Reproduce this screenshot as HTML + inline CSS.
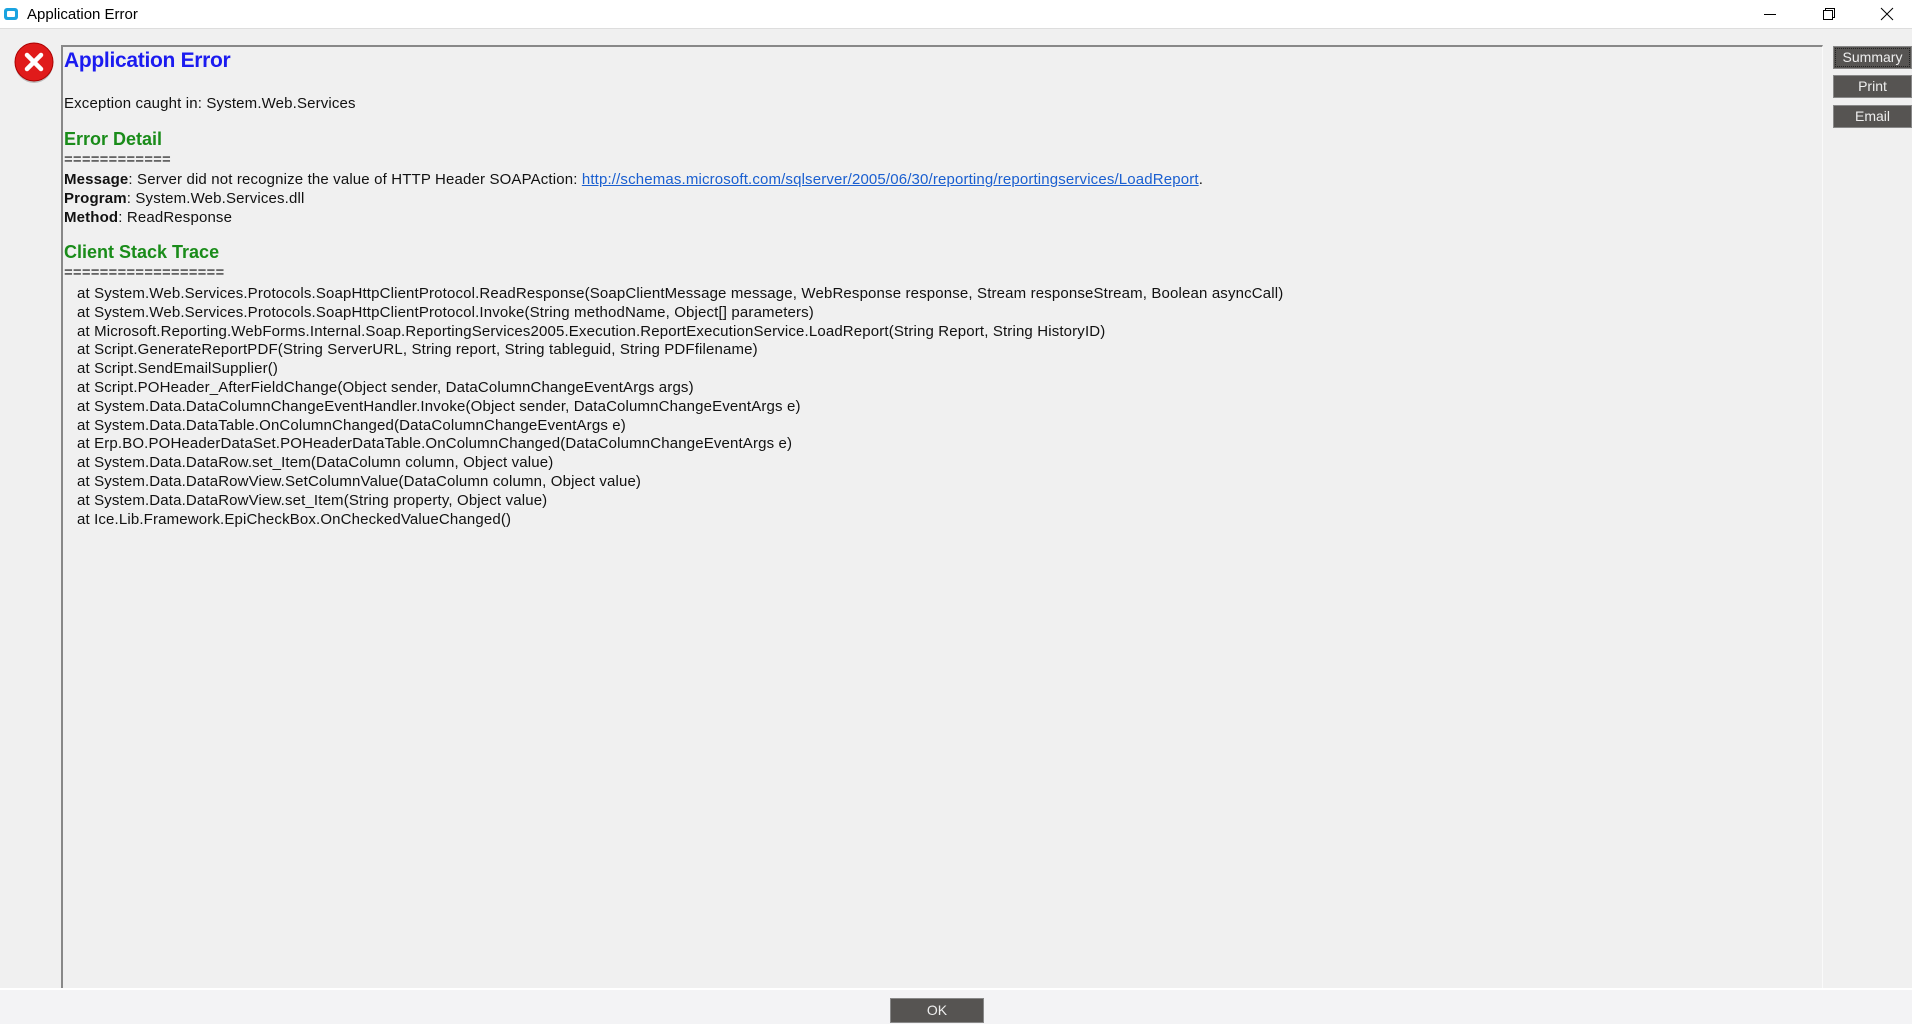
<!DOCTYPE html>
<html><head><meta charset="utf-8"><style>
*{margin:0;padding:0;box-sizing:border-box}
body{width:1912px;height:1024px;background:#f0f0f0;font-family:"Liberation Sans",Arial,sans-serif;position:relative;overflow:hidden;color:#111}
.title{position:absolute;left:0;top:0;width:1912px;height:29px;background:#fff;border-bottom:1px solid #ddd}
.title .t{position:absolute;left:27px;top:6px;font-size:15px;color:#000}
.title .ic{position:absolute;left:4px;top:8px;width:14px;height:12px;border-radius:3px;background:#1aa3e0}
.title .ic:after{content:"";position:absolute;left:3px;top:3px;width:8px;height:6px;background:#fff;border-radius:1px}
.panel{position:absolute;left:61px;top:45px;width:1762px;height:943px;border-top:2px solid #888;border-left:2px solid #888;border-right:1px solid #fafafa;background:#f0f0f0}
.txt{position:absolute;left:64px;top:0;font-size:15px;white-space:pre;line-height:18.8px;letter-spacing:0.15px}
.h1{position:absolute;left:64px;top:49px;font-size:21px;color:#1b1bf0;font-weight:bold;letter-spacing:-0.3px}
.g{color:#1a8c1a;font-size:18px;font-weight:bold;letter-spacing:0}
a{color:#1a5fd0;text-decoration:underline}
.btn{position:absolute;background:#565452;color:#eee;font-size:14px;text-align:center;border:1px solid #888}
.bottom{position:absolute;left:0;top:988px;width:1912px;height:36px;background:#f3f3f5;border-top:2px solid #fff}
</style></head><body>
<div class="title"><div class="ic"></div><div class="t">Application Error</div>
<svg style="position:absolute;left:1763px;top:8px" width="14" height="14"><path d="M1 6.5H13" stroke="#000" stroke-width="1"/></svg>
<svg style="position:absolute;left:1822px;top:7px" width="14" height="14"><path d="M1.5 3.5H10.5V12.5H1.5Z M3.5 3.5V1.5H12.5V10.5H10.5" stroke="#000" fill="none"/></svg>
<svg style="position:absolute;left:1880px;top:7px" width="14" height="14"><path d="M1 1L13 13M13 1L1 13" stroke="#000"/></svg>
</div>
<svg style="position:absolute;left:13px;top:42px" width="44" height="44"><circle cx="21" cy="22" r="19" fill="#888" opacity=".5"/><circle cx="21" cy="20" r="19" fill="#e01b1b" stroke="#a00" stroke-width="1"/><path d="M14 13L28 27M28 13L14 27" stroke="#fff" stroke-width="4.5" stroke-linecap="round"/></svg>
<div class="panel"></div>
<div class="h1">Application Error</div>
<div class="txt" style="top:95px">Exception caught in: System.Web.Services</div>
<div class="txt g" style="top:130px">Error Detail</div>
<div class="txt" style="top:151px">============</div>
<div class="txt" style="top:171px"><b>Message</b>: Server did not recognize the value of HTTP Header SOAPAction: <a>http://schemas.microsoft.com/sqlserver/2005/06/30/reporting/reportingservices/LoadReport</a>.
<b>Program</b>: System.Web.Services.dll
<b>Method</b>: ReadResponse</div>
<div class="txt g" style="top:243px">Client Stack Trace</div>
<div class="txt" style="top:264px">==================</div>
<div class="txt" style="top:285px">   at System.Web.Services.Protocols.SoapHttpClientProtocol.ReadResponse(SoapClientMessage message, WebResponse response, Stream responseStream, Boolean asyncCall)
   at System.Web.Services.Protocols.SoapHttpClientProtocol.Invoke(String methodName, Object[] parameters)
   at Microsoft.Reporting.WebForms.Internal.Soap.ReportingServices2005.Execution.ReportExecutionService.LoadReport(String Report, String HistoryID)
   at Script.GenerateReportPDF(String ServerURL, String report, String tableguid, String PDFfilename)
   at Script.SendEmailSupplier()
   at Script.POHeader_AfterFieldChange(Object sender, DataColumnChangeEventArgs args)
   at System.Data.DataColumnChangeEventHandler.Invoke(Object sender, DataColumnChangeEventArgs e)
   at System.Data.DataTable.OnColumnChanged(DataColumnChangeEventArgs e)
   at Erp.BO.POHeaderDataSet.POHeaderDataTable.OnColumnChanged(DataColumnChangeEventArgs e)
   at System.Data.DataRow.set_Item(DataColumn column, Object value)
   at System.Data.DataRowView.SetColumnValue(DataColumn column, Object value)
   at System.Data.DataRowView.set_Item(String property, Object value)
   at Ice.Lib.Framework.EpiCheckBox.OnCheckedValueChanged()</div>
<div class="btn" style="left:1833px;top:46px;width:79px;height:23px;line-height:20px;outline:1px dotted #222;outline-offset:-3px">Summary</div>
<div class="btn" style="left:1833px;top:75px;width:79px;height:23px;line-height:21px">Print</div>
<div class="btn" style="left:1833px;top:105px;width:79px;height:23px;line-height:21px">Email</div>
<div class="bottom"></div>
<div class="btn" style="left:890px;top:998px;width:94px;height:25px;line-height:23px">OK</div>
</body></html>
